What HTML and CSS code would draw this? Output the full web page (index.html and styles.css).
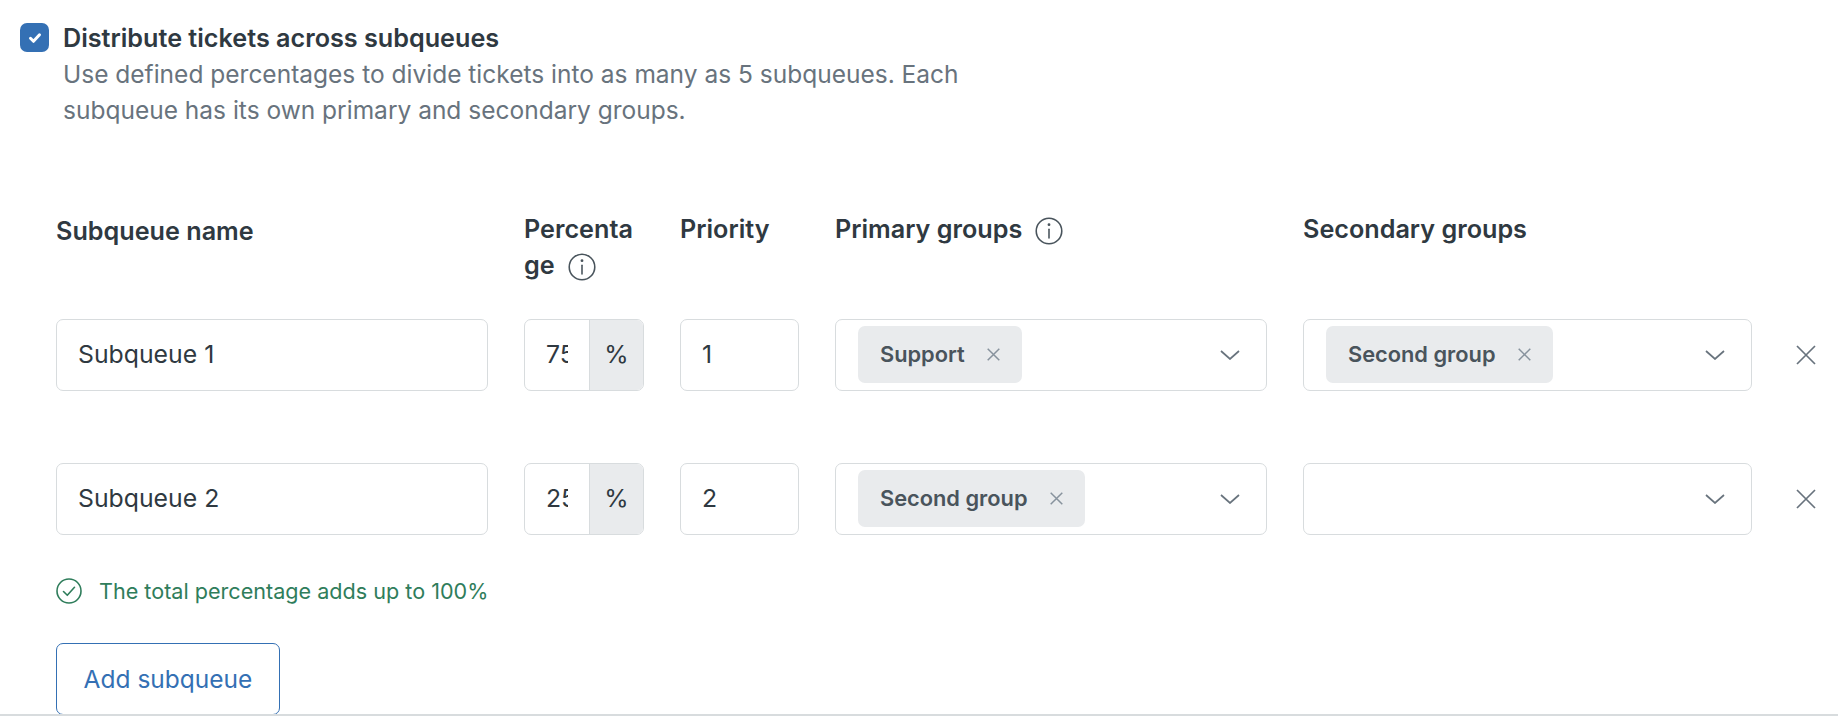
FILE: index.html
```html
<!DOCTYPE html>
<html lang="en">
<head>
<meta charset="utf-8">
<title>Subqueues</title>
<link rel="stylesheet" href="styles.css">
</head>
<body>
<main class="page">
  <section class="option">
    <span class="checkbox">
      <svg viewBox="0 0 12 12" width="18" height="18"><path d="M3 6.2 5 8.2 9 3.9" fill="none" stroke="#fff" stroke-width="2" stroke-linecap="round" stroke-linejoin="round"/></svg>
    </span>
    <div class="option-text">
      <div class="option-title">Distribute tickets across subqueues</div>
      <p class="option-desc">Use defined percentages to divide tickets into as many as 5 subqueues. Each subqueue has its own primary and secondary groups.</p>
    </div>
  </section>

  <section class="table">
    <div class="row head">
      <div class="th th-name">Subqueue name</div>
      <div class="th th-wrap">Percentage<svg class="info" viewBox="0 0 16 16"><circle cx="8" cy="8" r="7.3" fill="none" stroke="#49545c" stroke-width="0.9"/><path d="M8 7v5" stroke="#49545c" stroke-width="0.9" stroke-linecap="round"/><circle cx="8" cy="4.400" r="0.8" fill="#49545c"/></svg></div>
      <div class="th">Priority</div>
      <div class="th">Primary groups<svg class="info" viewBox="0 0 16 16"><circle cx="8" cy="8" r="7.3" fill="none" stroke="#49545c" stroke-width="0.9"/><path d="M8 7v5" stroke="#49545c" stroke-width="0.9" stroke-linecap="round"/><circle cx="8" cy="4.400" r="0.8" fill="#49545c"/></svg></div>
      <div class="th">Secondary groups</div>
    </div>

    <div class="row data">
      <div class="field">Subqueue 1</div>
      <div class="pct"><span class="pct-value"><span>75</span></span><span class="pct-unit">%</span></div>
      <div class="field">1</div>
      <div class="select">
        <span class="tag">Support<svg class="tag-x" viewBox="0 0 13 13"><path d="M.7.7l11.6 11.6M12.300.7.7 12.300" stroke="#87929d" stroke-width="1.500" fill="none"/></svg></span>
        <svg class="chevron" viewBox="0 0 20 10"><path d="M1 1l9 8 9-8" fill="none" stroke="#68737d" stroke-width="1.700"/></svg>
      </div>
      <div class="select">
        <span class="tag">Second group<svg class="tag-x" viewBox="0 0 13 13"><path d="M.7.7l11.6 11.6M12.300.7.7 12.300" stroke="#87929d" stroke-width="1.500" fill="none"/></svg></span>
        <svg class="chevron" viewBox="0 0 20 10"><path d="M1 1l9 8 9-8" fill="none" stroke="#68737d" stroke-width="1.700"/></svg>
      </div>
      <svg class="remove" viewBox="0 0 20 20"><path d="M1 1l18 18M19 1 1 19" stroke="#68737d" stroke-width="1.700" fill="none"/></svg>
    </div>

    <div class="row data last">
      <div class="field">Subqueue 2</div>
      <div class="pct"><span class="pct-value"><span>25</span></span><span class="pct-unit">%</span></div>
      <div class="field">2</div>
      <div class="select">
        <span class="tag">Second group<svg class="tag-x" viewBox="0 0 13 13"><path d="M.7.7l11.6 11.6M12.300.7.7 12.300" stroke="#87929d" stroke-width="1.500" fill="none"/></svg></span>
        <svg class="chevron" viewBox="0 0 20 10"><path d="M1 1l9 8 9-8" fill="none" stroke="#68737d" stroke-width="1.700"/></svg>
      </div>
      <div class="select">
        <svg class="chevron" viewBox="0 0 20 10"><path d="M1 1l9 8 9-8" fill="none" stroke="#68737d" stroke-width="1.700"/></svg>
      </div>
      <svg class="remove" viewBox="0 0 20 20"><path d="M1 1l18 18M19 1 1 19" stroke="#68737d" stroke-width="1.700" fill="none"/></svg>
    </div>
  </section>

  <div class="status">
    <svg class="status-icon" viewBox="0 0 26 26"><circle cx="13" cy="13" r="12" fill="none" stroke="#2f7d5b" stroke-width="1.600"/><path d="M7.500 13.500l3.800 3.800 7.200-8" fill="none" stroke="#2f7d5b" stroke-width="1.600" stroke-linecap="round" stroke-linejoin="round"/></svg>
    <span>The total percentage adds up to 100%</span>
  </div>

  <button class="add" type="button">Add subqueue</button>
</main>
<hr class="rule">
</body>
</html>
```
FILE: styles.css
```css
* {
  box-sizing: border-box;
}

html,
body {
  margin: 0;
  background: #fff;
}

body {
  height: 724px;
  overflow: hidden;
  position: relative;
  font-family: Inter, "Liberation Sans", sans-serif;
  font-size: 25.200px;
  line-height: 36px;
  color: #2f3941;
}

.page {
  padding: 20px 0 0 20px;
}

.option {
  display: flex;
  align-items: flex-start;
  gap: 14px;
}

.checkbox {
  flex: none;
  width: 29px;
  height: 29px;
  margin-top: 3px;
  border-radius: 7px;
  background: #3470b4;
  display: flex;
  align-items: center;
  justify-content: center;
}

.option-title {
  font-weight: 600;
}

.option-desc {
  margin: 0;
  width: 920px;
  color: #68737d;
  font-size: 24.500px;
}

.table {
  margin: 83px 0 0 36px;
}

.row {
  display: grid;
  grid-template-columns: 432px 120px 119px 432px 449px 36px;
  column-gap: 36px;
}

.head {
  height: 108px;
  align-items: start;
}

.th {
  font-weight: 600;
}

.th-name {
  padding-top: 2px;
}

.th-wrap {
  overflow-wrap: anywhere;
}

.info {
  width: 28px;
  height: 28px;
  margin-left: 13px;
  vertical-align: -7px;
}

.data {
  height: 72px;
  margin-bottom: 72px;
  align-items: center;
}

.data.last {
  margin-bottom: 38px;
}

.field,
.select,
.pct {
  height: 72px;
  border: 1.500px solid #d8dcde;
  border-radius: 7px;
  background: #fff;
  font-size: 24.800px;
}

.field {
  padding: 0 21px;
  line-height: 69px;
}

.pct {
  display: flex;
  overflow: hidden;
}

.pct-value {
  flex: 1;
  min-width: 0;
  padding: 0 21px;
  line-height: 69px;
}

.pct-value span {
  display: block;
  overflow: hidden;
  white-space: nowrap;
}

.pct-unit {
  flex: none;
  width: 54px;
  text-align: center;
  line-height: 69px;
  background: #e9ebed;
  border-left: 1.500px solid #d8dcde;
}

.select {
  display: flex;
  align-items: center;
  justify-content: space-between;
  padding: 0 26px 0 22px;
}

.tag {
  display: inline-flex;
  align-items: center;
  height: 57px;
  margin-bottom: 2px;
  padding: 0 22px 0 22px;
  border-radius: 7px;
  background: #e9ebed;
  color: #49545c;
  font-size: 21.800px;
  font-weight: 600;
}

.tag-x {
  width: 13px;
  height: 13px;
  margin-left: 22px;
}

.chevron {
  width: 20px;
  height: 10px;
  margin-left: auto;
}

.remove {
  width: 20px;
  height: 20px;
  justify-self: center;
}

.status {
  display: flex;
  align-items: center;
  gap: 17px;
  margin-left: 36px;
  color: #2f7d5b;
  font-size: 21.600px;
}

.status-icon {
  width: 26px;
  height: 26px;
}

.add {
  display: block;
  width: 224px;
  height: 72px;
  margin: 34px 0 0 36px;
  border: 1.500px solid #3470b4;
  border-radius: 7px;
  background: #fff;
  color: #3470b4;
  font-family: inherit;
  font-size: 24.500px;
}

.rule {
  position: absolute;
  left: 0;
  right: 0;
  top: 714px;
  margin: 0;
  border: 0;
  height: 2px;
  background: #d8dcde;
}
```
